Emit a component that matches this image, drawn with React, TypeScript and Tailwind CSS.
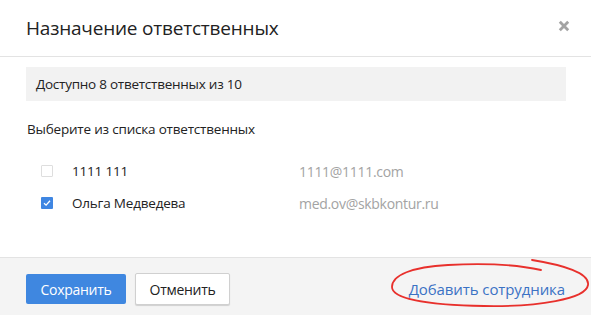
import React, { useState } from 'react'

const people = [
  { name: '1111 111', email: '1111@1111.com', checked: false },
  { name: 'Ольга Медведева', email: 'med.ov@skbkontur.ru', checked: true },
]

const Checkbox = ({ checked, onClick }: { checked: boolean; onClick: () => void }) => (
  <button
    onClick={onClick}
    className={
      checked
        ? 'flex h-[12px] w-[12px] shrink-0 items-center justify-center rounded-[1px] bg-[#3f86e2]'
        : 'flex h-[12px] w-[12px] shrink-0 items-center justify-center rounded-[1px] border border-[#dedede] bg-white'
    }
  >
    {checked && (
      <svg width="8" height="8" viewBox="0 0 8 8" fill="none">
        <path d="M1 4.3 L3.1 6.2 L7 1.8" stroke="white" strokeWidth="1.3" />
      </svg>
    )}
  </button>
)

export default function App() {
  const [list, setList] = useState(people)

  const toggle = (i: number) => {
    setList(list.map((p, j) => (j === i ? { ...p, checked: !p.checked } : p)))
  }

  return (
    <div className="flex h-[315px] w-[591px] flex-col bg-white font-['Open_Sans',sans-serif] text-[#222]">
      {/* header */}
      <div className="flex h-[57px] shrink-0 items-center justify-between border-b border-[#e3e3e3] pl-[26px] pr-[21px]">
        <h1 className="text-[19px] leading-none tracking-[-0.2px] text-[#222]">Назначение ответственных</h1>
        <svg width="12" height="12" viewBox="0 0 12 12" className="mt-[-4px]">
          <path d="M1.8 1.8 L10.2 10.2 M10.2 1.8 L1.8 10.2" stroke="#a3a3a3" strokeWidth="2.8" />
        </svg>
      </div>

      {/* body */}
      <div className="flex flex-1 flex-col px-[26px] pt-[10px] pr-[25px]">
        <div className="flex h-[34px] items-center bg-[#f2f2f2] px-[10px] text-[13.5px] tracking-[-0.25px]">
          Доступно 8 ответственных из 10
        </div>
        <div className="mt-[18px] pl-[1px] text-[13.5px] leading-[20px] tracking-[-0.2px]">
          Выберите из списка ответственных
        </div>
        <div className="mt-[22px] flex flex-col gap-[12px] pl-[15px]">
          {list.map((p, i) => (
            <div key={p.email} className="flex h-[20px] items-center text-[13.5px] tracking-[-0.2px]">
              <Checkbox checked={p.checked} onClick={() => toggle(i)} />
              <span className="ml-[19px] w-[227px]">{p.name}</span>
              <span className="text-[14px] tracking-[-0.3px] text-[#a3a3a3]">{p.email}</span>
            </div>
          ))}
        </div>
      </div>

      {/* footer */}
      <div className="flex h-[58px] shrink-0 items-start border-t border-[#e3e3e3] bg-[#f4f4f4] pl-[26px] pr-[26px] pt-[15px]">
        <div className="flex h-[32px] w-full items-center">
          <button className="h-[30px] w-[100px] rounded-[2px] bg-[#3f87e0] text-[14px] tracking-[-0.3px] text-white">
            Сохранить
          </button>
          <button className="ml-[9px] h-[32px] w-[95px] rounded-[2px] border border-[#d0d0d0] bg-white text-[14px] tracking-[-0.3px] text-[#222] shadow-[0_1px_1px_rgba(0,0,0,0.15)]">
            Отменить
          </button>
          <div className="relative ml-auto">
            <a className="block text-[15px] leading-[20px] tracking-[-0.1px] text-[#3b72c4]">Добавить сотрудника</a>
            <svg
              width="206"
              height="54"
              viewBox="0 0 206 54"
              className="pointer-events-none absolute left-[-21px] top-[-22px]"
              fill="none"
            >
              <path
                d="M144 3 C175 8 202 16 200 28 C198 42 150 50 96 49 C40 48 4 42 4 30 C4 18 24 10 60 8 C95 6 130 8 153 13"
                stroke="#e8302c"
                strokeWidth="1.8"
                strokeLinecap="round"
              />
            </svg>
          </div>
        </div>
      </div>
    </div>
  )
}
